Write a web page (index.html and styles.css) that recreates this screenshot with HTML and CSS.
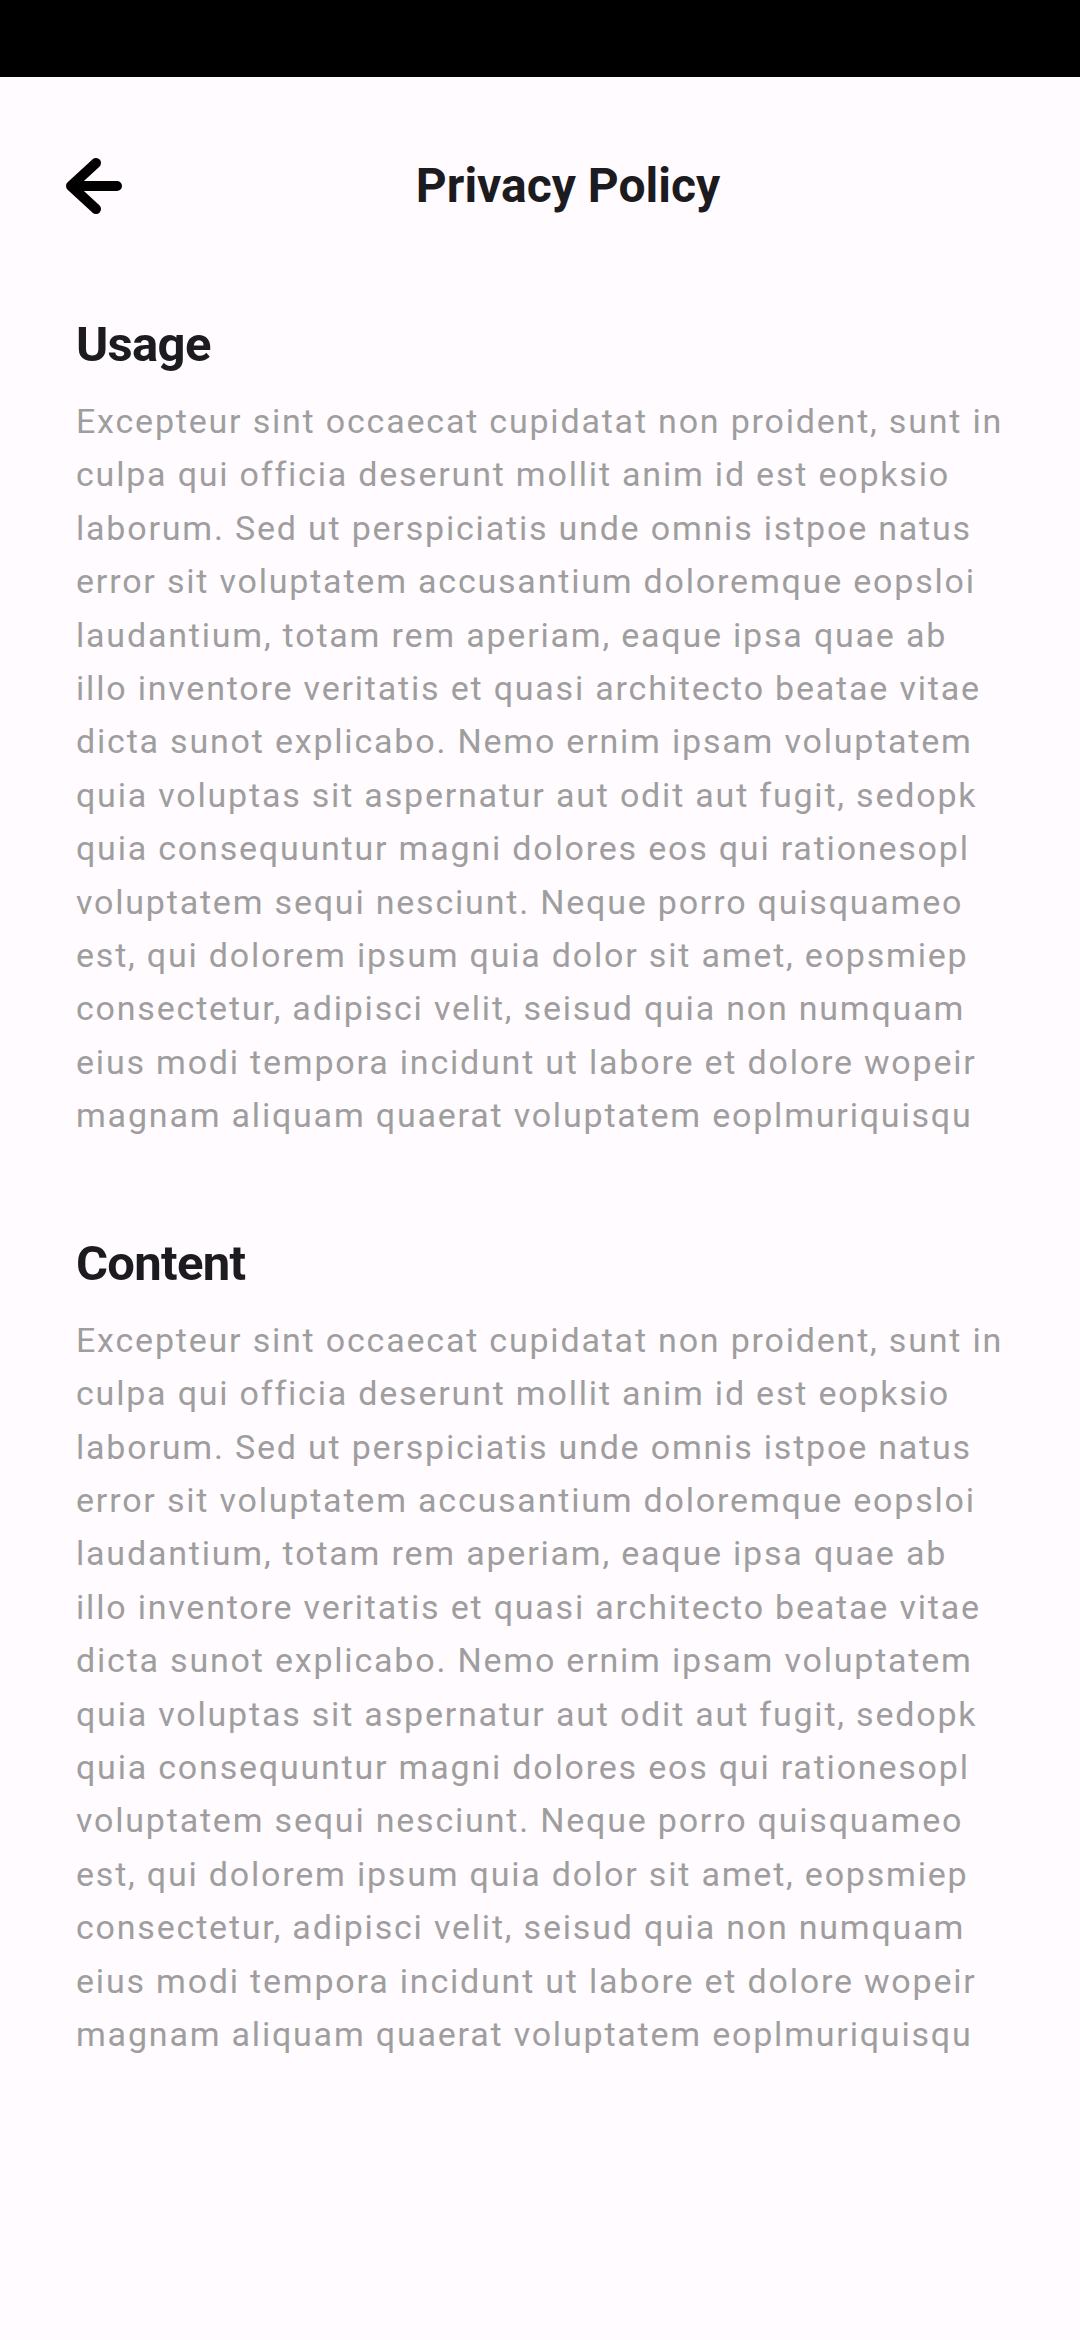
FILE: index.html
```html
<!DOCTYPE html>
<html lang="en">
<head>
<meta charset="utf-8">
<title>Privacy Policy</title>
<link rel="stylesheet" href="styles.css">
</head>
<body>
<div class="status"></div>
<header class="appbar">
  <button class="back" aria-label="Back">
    <svg viewBox="0 0 56 56" width="56" height="56">
      <path d="M30 5 L5 28 L30 51 M5 28 L51 28" fill="none" stroke="#000" stroke-width="10" stroke-linecap="round" stroke-linejoin="round"/>
    </svg>
  </button>
  <h1 class="title">Privacy Policy</h1>
</header>
<main class="content">
  <section class="section">
    <h2 class="heading">Usage</h2>
    <p class="text">Excepteur sint occaecat cupidatat non proident, sunt in<br>culpa qui officia deserunt mollit anim id est eopksio<br>laborum. Sed ut perspiciatis unde omnis istpoe natus<br>error sit voluptatem accusantium doloremque eopsloi<br>laudantium, totam rem aperiam, eaque ipsa quae ab<br>illo inventore veritatis et quasi architecto beatae vitae<br>dicta sunot explicabo. Nemo ernim ipsam voluptatem<br>quia voluptas sit aspernatur aut odit aut fugit, sedopk<br>quia consequuntur magni dolores eos qui rationesopl<br>voluptatem sequi nesciunt. Neque porro quisquameo<br>est, qui dolorem ipsum quia dolor sit amet, eopsmiep<br>consectetur, adipisci velit, seisud quia non numquam<br>eius modi tempora incidunt ut labore et dolore wopeir<br>magnam aliquam quaerat voluptatem eoplmuriquisqu</p>
  </section>
  <section class="section">
    <h2 class="heading">Content</h2>
    <p class="text">Excepteur sint occaecat cupidatat non proident, sunt in<br>culpa qui officia deserunt mollit anim id est eopksio<br>laborum. Sed ut perspiciatis unde omnis istpoe natus<br>error sit voluptatem accusantium doloremque eopsloi<br>laudantium, totam rem aperiam, eaque ipsa quae ab<br>illo inventore veritatis et quasi architecto beatae vitae<br>dicta sunot explicabo. Nemo ernim ipsam voluptatem<br>quia voluptas sit aspernatur aut odit aut fugit, sedopk<br>quia consequuntur magni dolores eos qui rationesopl<br>voluptatem sequi nesciunt. Neque porro quisquameo<br>est, qui dolorem ipsum quia dolor sit amet, eopsmiep<br>consectetur, adipisci velit, seisud quia non numquam<br>eius modi tempora incidunt ut labore et dolore wopeir<br>magnam aliquam quaerat voluptatem eoplmuriquisqu</p>
  </section>
</main>
</body>
</html>
```

FILE: styles.css
```css
html, body {
  margin: 0;
  padding: 0;
  background: #fffbfe;
}
body {
  width: 1080px;
  min-height: 2340px;
  font-family: Roboto, "Noto Sans", sans-serif;
}
.status {
  height: 77px;
  background: #000;
}
.appbar {
  height: 218px;
  display: flex;
  align-items: center;
  padding: 0 66px;
  box-sizing: border-box;
}
.back {
  width: 56px;
  height: 56px;
  padding: 0;
  border: 0;
  background: none;
  display: flex;
}
.title {
  flex: 1;
  margin: 0;
  text-align: center;
  font-size: 48px;
  line-height: 48px;
  font-weight: 700;
  color: #1c1b1f;
}
.content {
  padding: 25px 0 0 76px;
}
.section + .section {
  margin-top: 96px;
}
.heading {
  margin: 0 0 26px;
  font-size: 49px;
  line-height: 49px;
  font-weight: 700;
  letter-spacing: -0.7px;
  color: #1c1b1f;
}
.text {
  margin: 0;
  font-size: 34px;
  line-height: 53.4px;
  letter-spacing: 1.8px;
  color: #9e9e9e;
  white-space: nowrap;
}
```
